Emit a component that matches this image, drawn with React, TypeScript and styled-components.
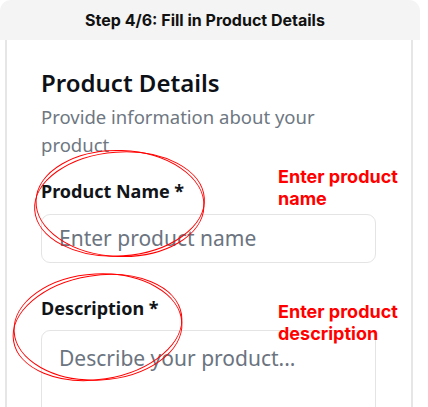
import React from "react";
import styled, { createGlobalStyle } from "styled-components";

const Global = createGlobalStyle`
  html, body { margin: 0; padding: 0; background: #ffffff; }
  body { width: 428px; height: 407px; overflow: hidden; }
  * { box-sizing: border-box; }
`;

const Frame = styled.div`
  position: relative;
  width: 428px;
  height: 407px;
  overflow: hidden;
  background: #ffffff;
`;

const StepBar = styled.div`
  width: 420px;
  height: 40px;
  background: #f3f4f3;
  border-radius: 11px 11px 0 0;
  display: flex;
  align-items: center;
  justify-content: center;
  padding-right: 10px;
  font-family: Inter, "Liberation Sans", sans-serif;
  font-weight: 700;
  font-size: 16px;
  color: #111111;
`;

const Shot = styled.div`
  width: 420px;
  padding-left: 5px;
`;

const Card = styled.div`
  width: 408px;
  height: 400px;
  border-left: 2px solid #e6e6e6;
  border-right: 2px solid #e6e6e6;
  background: #ffffff;
  padding: 27px 34px 0 34px;
  font-family: "Noto Sans", "Open Sans", sans-serif;
  display: flex;
  flex-direction: column;
`;

const Title = styled.h2`
  margin: 0;
  font-size: 24px;
  line-height: 31px;
  font-weight: 600;
  color: #0d1117;
`;

const Subtitle = styled.p`
  margin: 5px 0 0 0;
  font-size: 18.5px;
  line-height: 28px;
  color: #6e7782;
  width: 300px;
`;

const Field = styled.div<{ $top: number }>`
  display: flex;
  flex-direction: column;
  margin-top: ${(p) => p.$top}px;
`;

const Label = styled.label`
  font-size: 18px;
  line-height: 24px;
  font-weight: 700;
  color: #111418;
`;

const Input = styled.div`
  margin-top: 11px;
  width: 335px;
  height: 49px;
  border: 1px solid #e4e4e4;
  border-radius: 9px;
  padding-left: 17px;
  font-size: 21px;
  line-height: 47px;
  color: #6b7480;
`;

const TextArea = styled.div`
  margin-top: 10px;
  width: 335px;
  height: 140px;
  border: 1px solid #e4e4e4;
  border-radius: 9px;
  padding: 12px 17px;
  font-size: 21px;
  line-height: 31px;
  color: #6b7480;
`;

const Note = styled.div<{ $top: number }>`
  position: absolute;
  left: 278px;
  top: ${(p) => p.$top}px;
  font-family: Inter, "Liberation Sans", sans-serif;
  font-weight: 700;
  font-size: 18px;
  line-height: 22px;
  color: #ff0000;
`;

const Marks = styled.svg`
  position: absolute;
  left: 0;
  top: 0;
  pointer-events: none;
`;

export default function App() {
  return (
    <Frame>
      <Global />
      <StepBar>Step 4/6: Fill in Product Details</StepBar>
      <Shot>
        <Card>
          <Title>Product Details</Title>
          <Subtitle>Provide information about your product</Subtitle>
          <Field $top={20}>
            <Label>Product Name *</Label>
            <Input>Enter product name</Input>
          </Field>
          <Field $top={33}>
            <Label>Description *</Label>
            <TextArea>Describe your product...</TextArea>
          </Field>
        </Card>
      </Shot>
      <Note $top={166}>
        Enter product
        <br />
        name
      </Note>
      <Note $top={301}>
        Enter product
        <br />
        description
      </Note>
      <Marks width="428" height="407" viewBox="0 0 428 407">
        <g fill="none" stroke="#ff0000" strokeWidth="1">
          <ellipse cx="119.5" cy="204" rx="85" ry="52" transform="rotate(-4 119.5 204)" />
          <ellipse cx="120" cy="203.5" rx="84" ry="53" transform="rotate(2 120 203.5)" />
          <ellipse cx="97.5" cy="327.5" rx="85" ry="52" transform="rotate(-9 97.5 327.5)" />
          <ellipse cx="98" cy="327" rx="84" ry="53" transform="rotate(-3 98 327)" />
        </g>
      </Marks>
    </Frame>
  );
}
